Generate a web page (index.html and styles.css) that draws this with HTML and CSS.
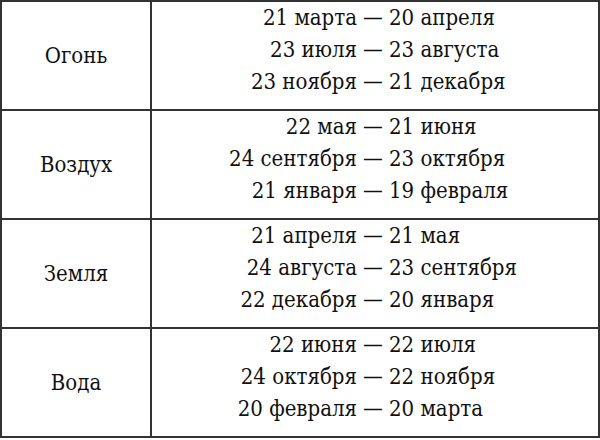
FILE: index.html
```html
<!DOCTYPE html>
<html lang="ru">
<head>
<meta charset="utf-8">
<link rel="stylesheet" href="styles.css">
</head>
<body>
<table class="elements">
  <tr>
    <td class="name">Огонь</td>
    <td class="dates"><div class="ranges">
      <span class="from">21 марта</span><span class="dash">—</span><span class="to">20 апреля</span>
      <span class="from">23 июля</span><span class="dash">—</span><span class="to">23 августа</span>
      <span class="from">23 ноября</span><span class="dash">—</span><span class="to">21 декабря</span>
    </div></td>
  </tr>
  <tr>
    <td class="name">Воздух</td>
    <td class="dates"><div class="ranges">
      <span class="from">22 мая</span><span class="dash">—</span><span class="to">21 июня</span>
      <span class="from">24 сентября</span><span class="dash">—</span><span class="to">23 октября</span>
      <span class="from">21 января</span><span class="dash">—</span><span class="to">19 февраля</span>
    </div></td>
  </tr>
  <tr>
    <td class="name">Земля</td>
    <td class="dates"><div class="ranges">
      <span class="from">21 апреля</span><span class="dash">—</span><span class="to">21 мая</span>
      <span class="from">24 августа</span><span class="dash">—</span><span class="to">23 сентября</span>
      <span class="from">22 декабря</span><span class="dash">—</span><span class="to">20 января</span>
    </div></td>
  </tr>
  <tr>
    <td class="name">Вода</td>
    <td class="dates"><div class="ranges">
      <span class="from">22 июня</span><span class="dash">—</span><span class="to">22 июля</span>
      <span class="from">24 октября</span><span class="dash">—</span><span class="to">22 ноября</span>
      <span class="from">20 февраля</span><span class="dash">—</span><span class="to">20 марта</span>
    </div></td>
  </tr>
</table>
</body>
</html>
```
FILE: styles.css
```css
html, body {
  margin: 0;
  padding: 0;
  background: #fff;
}
.elements {
  border-collapse: collapse;
  width: 600px;
  font-family: "DejaVu Serif Condensed", "DejaVu Serif", serif;
  font-stretch: condensed;
  font-size: 22px;
  color: #111;
}
.elements td {
  border: 2px solid #333;
  padding: 0;
  vertical-align: middle;
}
.name {
  width: 148px;
  height: 107px;
  text-align: center;
}
.dates {
  padding-bottom: 11px !important;
}
.ranges {
  display: grid;
  grid-template-columns: 205px 32px auto;
  line-height: 32px;
  white-space: nowrap;
}
.from { text-align: right; }
.dash { text-align: center; }
.to { text-align: left; }
```
